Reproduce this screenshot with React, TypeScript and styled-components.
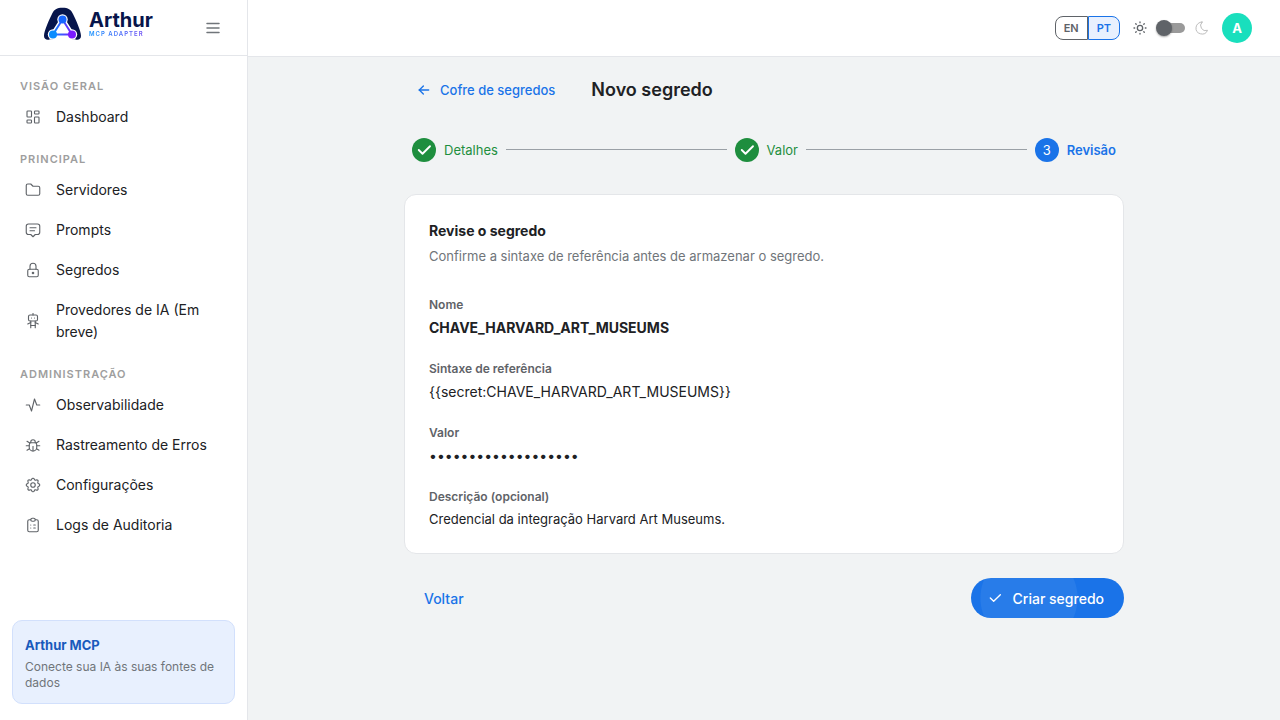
import React, { useState } from 'react';
import styled, { createGlobalStyle, css } from 'styled-components';
import {
  TbActivity,
  TbArrowLeft,
  TbBug,
  TbCheck,
  TbClipboardList,
  TbFolder,
  TbLayoutDashboard,
  TbLock,
  TbMessage2,
  TbMoon,
  TbRobot,
  TbSettings,
  TbSun,
} from 'react-icons/tb';
import type { IconType } from 'react-icons';

const GlobalStyle = createGlobalStyle`
  *, *::before, *::after { box-sizing: border-box; }
  body {
    margin: 0;
    background: #f1f3f4;
    color: #202124;
    font-family: Inter, "Open Sans", sans-serif;
    font-size: 14px;
  }
  button { font-family: inherit; cursor: pointer; }
  h1, h2, h3, p, dl, dd, ol, ul { margin: 0; padding: 0; }
`;

const Shell = styled.div`
  display: flex;
  min-height: 100vh;
`;

const Sidebar = styled.aside`
  display: flex;
  flex-direction: column;
  flex: 0 0 248px;
  background: #fff;
  border-right: 1px solid #e4e6ea;
`;

const Brand = styled.div`
  display: flex;
  align-items: center;
  justify-content: space-between;
  height: 56px;
  padding: 0 27px 0 42px;
  border-bottom: 1px solid #e4e6ea;
`;

const Logo = styled.a`
  display: flex;
  align-items: center;
  gap: 6px;
  padding-bottom: 8px;
  text-decoration: none;
`;

const Wordmark = styled.span`
  display: flex;
  flex-direction: column;
`;

const BrandName = styled.span`
  color: #07154b;
  font-size: 20px;
  font-weight: 700;
  line-height: 20px;
`;

const BrandTag = styled.span`
  background: linear-gradient(90deg, #1292ff, #7b3ff2);
  background-clip: text;
  -webkit-background-clip: text;
  color: transparent;
  font-size: 6px;
  font-weight: 600;
  letter-spacing: 1px;
  line-height: 8px;
`;

const IconButton = styled.button`
  display: flex;
  padding: 0;
  border: 0;
  background: none;
  color: #70757a;
`;

const Nav = styled.nav`
  flex: 1;
  padding-top: 8px;
`;

const NavHeading = styled.h2`
  padding: 14px 20px 3px;
  color: #9e9e9e;
  font-size: 11px;
  font-weight: 600;
  letter-spacing: 1px;
  line-height: 16px;
  text-transform: uppercase;
`;

const NavList = styled.ul`
  list-style: none;
`;

const NavLink = styled.a`
  display: flex;
  align-items: center;
  gap: 14px;
  padding: 9px 40px 9px 24px;
  color: #202124;
  line-height: 22px;
  text-decoration: none;

  svg {
    flex: none;
    width: 18px;
    height: 18px;
    color: #5f6368;
    stroke-width: 1.5;
  }
`;

const Promo = styled.section`
  margin: 12px 12px 16px;
  padding: 12px;
  border: 1px solid #d2e0fc;
  border-radius: 10px;
  background: #e8f0fe;
`;

const PromoTitle = styled.h3`
  margin-bottom: 2px;
  color: #185abc;
  font-size: 13px;
  font-weight: 700;
  line-height: 24px;
`;

const PromoText = styled.p`
  color: #70757a;
  font-size: 12px;
  line-height: 16px;
`;

const Page = styled.div`
  flex: 1;
  min-width: 0;
`;

const TopBar = styled.header`
  display: flex;
  align-items: center;
  justify-content: flex-end;
  height: 57px;
  padding: 0 28px 1px 0;
  border-bottom: 1px solid #e4e6ea;
  background: #fff;
`;

const LanguageGroup = styled.div`
  display: flex;
  margin-right: 12px;
`;

const LanguageButton = styled.button<{ $active: boolean }>`
  height: 24px;
  padding: 0 8px;
  border: 1px solid #5f6368;
  background: #fff;
  color: #5f6368;
  font-size: 11px;
  font-weight: 600;

  &:first-child { border-radius: 8px 0 0 8px; }
  &:last-child { border-radius: 0 8px 8px 0; }

  ${(p) =>
    p.$active &&
    css`
      border-color: #1a73e8;
      background: #e8f0fe;
      color: #1a73e8;
    `}
`;

const ThemeControl = styled.label`
  display: flex;
  align-items: center;
  gap: 8px;
  margin-right: 12px;
  color: #bdbdbd;

  svg { width: 16px; height: 16px; stroke-width: 1.5; }
  svg:first-child { color: #5f6368; stroke-width: 2; }
`;

const Switch = styled.input`
  position: relative;
  width: 30px;
  height: 16px;
  margin: 0;
  appearance: none;

  &::before {
    content: '';
    position: absolute;
    inset: 3px 1px;
    border-radius: 5px;
    background: #9a9a9a;
  }

  &::after {
    content: '';
    position: absolute;
    inset: 0 auto 0 0;
    width: 16px;
    border-radius: 50%;
    background: #5f6368;
    box-shadow: 0 1px 2px rgba(0, 0, 0, 0.35);
  }

  &:checked::after { inset: 0 0 0 auto; }
`;

const Avatar = styled.button`
  width: 30px;
  height: 30px;
  padding: 0;
  border: 0;
  border-radius: 50%;
  background: #19dfbd;
  color: #fff;
  font-size: 13px;
  font-weight: 700;
`;

const Content = styled.main`
  max-width: 720px;
  margin: 0 auto;
  padding: 13px 0 24px;
`;

const TitleRow = styled.div`
  display: flex;
  align-items: center;
  gap: 24px;
  height: 40px;
`;

const BackLink = styled.a`
  display: flex;
  align-items: center;
  gap: 8px;
  padding: 0 12px;
  color: #1a73e8;
  font-size: 13px;
  font-weight: 500;
  line-height: 20px;
  text-decoration: none;
`;

const Title = styled.h1`
  font-size: 18px;
  font-weight: 600;
  line-height: 24px;
`;

const Stepper = styled.ol`
  display: flex;
  align-items: center;
  gap: 8px;
  margin: 28px 0 32px;
  padding: 0 8px;
  list-style: none;
`;

const Step = styled.li<{ $done: boolean }>`
  display: flex;
  align-items: center;
  gap: 8px;
  flex: 1 1 auto;
  color: ${(p) => (p.$done ? '#1e8e3e' : '#1a73e8')};
  font-size: 13px;
  font-weight: ${(p) => (p.$done ? 400 : 600)};
  line-height: 24px;

  &:last-child { flex: none; }

  &:not(:last-child)::after {
    content: '';
    flex: 1;
    height: 2px;
    border-top: 1px solid #9aa0a6;
  }
`;

const StepMark = styled.span<{ $done: boolean }>`
  display: flex;
  align-items: center;
  justify-content: center;
  width: 24px;
  height: 24px;
  border-radius: 50%;
  background: ${(p) => (p.$done ? '#1e8e3e' : '#1a73e8')};
  color: #fff;
  font-weight: 400;

  svg { stroke-width: 2.5; }
`;

const Card = styled.section`
  padding: 24px;
  border: 1px solid #e4e6e9;
  border-radius: 12px;
  background: #fff;
`;

const CardTitle = styled.h2`
  margin-bottom: 4px;
  font-size: 14px;
  font-weight: 700;
  line-height: 24px;
`;

const CardIntro = styled.p`
  margin-bottom: 32px;
  color: #70757a;
  font-size: 13px;
  line-height: 18px;
`;

const Fields = styled.dl`
  display: flex;
  flex-direction: column;
  gap: 22px;
`;

const FieldLabel = styled.dt`
  margin-bottom: 4px;
  color: #5f6368;
  font-size: 12px;
  font-weight: 600;
  line-height: 16px;
`;

type FieldKind = 'name' | 'plain' | 'note';

const FieldValue = styled.dd<{ $kind: FieldKind }>`
  font-size: ${(p) => (p.$kind === 'note' ? 13 : 14)}px;
  font-weight: ${(p) => (p.$kind === 'name' ? 700 : 400)};
  line-height: ${(p) => (p.$kind === 'note' ? 20 : 22)}px;
`;

const Actions = styled.div`
  display: flex;
  justify-content: space-between;
  margin-top: 24px;
`;

const ActionButton = styled.button<{ $primary?: boolean }>`
  display: flex;
  align-items: center;
  gap: 10px;
  height: 40px;
  padding: 0 20px;
  border: 0;
  border-radius: 20px;
  background: transparent;
  color: #1a73e8;
  font-size: 14px;
  font-weight: 500;

  ${(p) =>
    p.$primary &&
    css`
      padding-left: 16px;
      background: radial-gradient(circle at 58px 50%, #287ce9 48px, #1a73e8 49px);
      color: #fff;
    `}
`;

const navGroups: { title: string; items: [string, IconType][] }[] = [
  { title: 'Visão geral', items: [['Dashboard', TbLayoutDashboard]] },
  {
    title: 'Principal',
    items: [
      ['Servidores', TbFolder],
      ['Prompts', TbMessage2],
      ['Segredos', TbLock],
      ['Provedores de IA (Em breve)', TbRobot],
    ],
  },
  {
    title: 'Administração',
    items: [
      ['Observabilidade', TbActivity],
      ['Rastreamento de Erros', TbBug],
      ['Configurações', TbSettings],
      ['Logs de Auditoria', TbClipboardList],
    ],
  },
];

const steps = [
  { label: 'Detalhes', done: true },
  { label: 'Valor', done: true },
  { label: 'Revisão', done: false },
];

const fields: { label: string; value: string; kind: FieldKind }[] = [
  { label: 'Nome', value: 'CHAVE_HARVARD_ART_MUSEUMS', kind: 'name' },
  { label: 'Sintaxe de referência', value: '{{secret:CHAVE_HARVARD_ART_MUSEUMS}}', kind: 'plain' },
  { label: 'Valor', value: '•'.repeat(19), kind: 'plain' },
  { label: 'Descrição (opcional)', value: 'Credencial da integração Harvard Art Museums.', kind: 'note' },
];

const LogoMark = () => (
  <svg width="41" height="34" viewBox="0 0 41 34" aria-hidden="true">
    <defs>
      <linearGradient id="mark" x1="10" y1="0" x2="31" y2="0" gradientUnits="userSpaceOnUse">
        <stop offset="0" stopColor="#0a8cff" />
        <stop offset="1" stopColor="#7a1bff" />
      </linearGradient>
    </defs>
    <path
      d="M2 29C2 24 7 13 10 7C12 2.500 15 0.800 20.500 0.800S29 2.500 31 7C34 13 39 24 39 29C39 32.500 35.500 33.500 33 32.200H8C5.500 33.500 2 32.500 2 29Z"
      fill="#07154b"
    />
    <path
      d="M20.500 12.500L11 27.500H30Z"
      fill="#fff"
      stroke="#fff"
      strokeWidth="5"
      strokeLinejoin="round"
    />
    <path d="M11 27.500h19v6.500h-19z" fill="#fff" />
    <g fill="#fff">
      <circle cx="20.500" cy="12.500" r="5.200" />
      <circle cx="11" cy="27.500" r="5.200" />
      <circle cx="30" cy="27.500" r="5.200" />
    </g>
    <path d="M20.500 12.500L11 27.500H30Z" fill="#fff" stroke="url(#mark)" strokeWidth="2" />
    <circle cx="20.500" cy="12.500" r="4" fill="#1766ff" />
    <circle cx="11" cy="27.500" r="4" fill="#0a8cff" />
    <circle cx="30" cy="27.500" r="4" fill="#7a1bff" />
  </svg>
);

const MenuIcon = () => (
  <svg width="14" height="12" viewBox="0 0 14 12" stroke="currentColor" strokeWidth="1.500" strokeLinecap="round" aria-hidden="true">
    <path d="M1 1.500h12M1 6h12M1 10.500h12" />
  </svg>
);

export default function App() {
  const [language, setLanguage] = useState('PT');

  return (
    <>
      <GlobalStyle />
      <Shell>
        <Sidebar>
          <Brand>
            <Logo href="#">
              <LogoMark />
              <Wordmark>
                <BrandName>Arthur</BrandName>
                <BrandTag>MCP ADAPTER</BrandTag>
              </Wordmark>
            </Logo>
            <IconButton type="button" aria-label="Menu">
              <MenuIcon />
            </IconButton>
          </Brand>
          <Nav>
            {navGroups.map((group) => (
              <React.Fragment key={group.title}>
                <NavHeading>{group.title}</NavHeading>
                <NavList>
                  {group.items.map(([label, Icon]) => (
                    <li key={label}>
                      <NavLink href="#">
                        <Icon aria-hidden="true" />
                        {label}
                      </NavLink>
                    </li>
                  ))}
                </NavList>
              </React.Fragment>
            ))}
          </Nav>
          <Promo>
            <PromoTitle>Arthur MCP</PromoTitle>
            <PromoText>Conecte sua IA às suas fontes de dados</PromoText>
          </Promo>
        </Sidebar>
        <Page>
          <TopBar>
            <LanguageGroup>
              {['EN', 'PT'].map((code) => (
                <LanguageButton
                  key={code}
                  type="button"
                  $active={language === code}
                  aria-pressed={language === code}
                  onClick={() => setLanguage(code)}
                >
                  {code}
                </LanguageButton>
              ))}
            </LanguageGroup>
            <ThemeControl>
              <TbSun aria-hidden="true" />
              <Switch type="checkbox" role="switch" aria-label="Tema escuro" />
              <TbMoon aria-hidden="true" />
            </ThemeControl>
            <Avatar type="button">A</Avatar>
          </TopBar>
          <Content>
            <TitleRow>
              <BackLink href="#">
                <TbArrowLeft size={16} aria-hidden="true" />
                Cofre de segredos
              </BackLink>
              <Title>Novo segredo</Title>
            </TitleRow>
            <Stepper>
              {steps.map((step, index) => (
                <Step key={step.label} $done={step.done}>
                  <StepMark $done={step.done}>
                    {step.done ? <TbCheck size={18} aria-hidden="true" /> : index + 1}
                  </StepMark>
                  {step.label}
                </Step>
              ))}
            </Stepper>
            <Card>
              <CardTitle>Revise o segredo</CardTitle>
              <CardIntro>Confirme a sintaxe de referência antes de armazenar o segredo.</CardIntro>
              <Fields>
                {fields.map((field) => (
                  <div key={field.label}>
                    <FieldLabel>{field.label}</FieldLabel>
                    <FieldValue $kind={field.kind}>{field.value}</FieldValue>
                  </div>
                ))}
              </Fields>
            </Card>
            <Actions>
              <ActionButton type="button">Voltar</ActionButton>
              <ActionButton type="button" $primary>
                <TbCheck size={16} aria-hidden="true" />
                Criar segredo
              </ActionButton>
            </Actions>
          </Content>
        </Page>
      </Shell>
    </>
  );
}
